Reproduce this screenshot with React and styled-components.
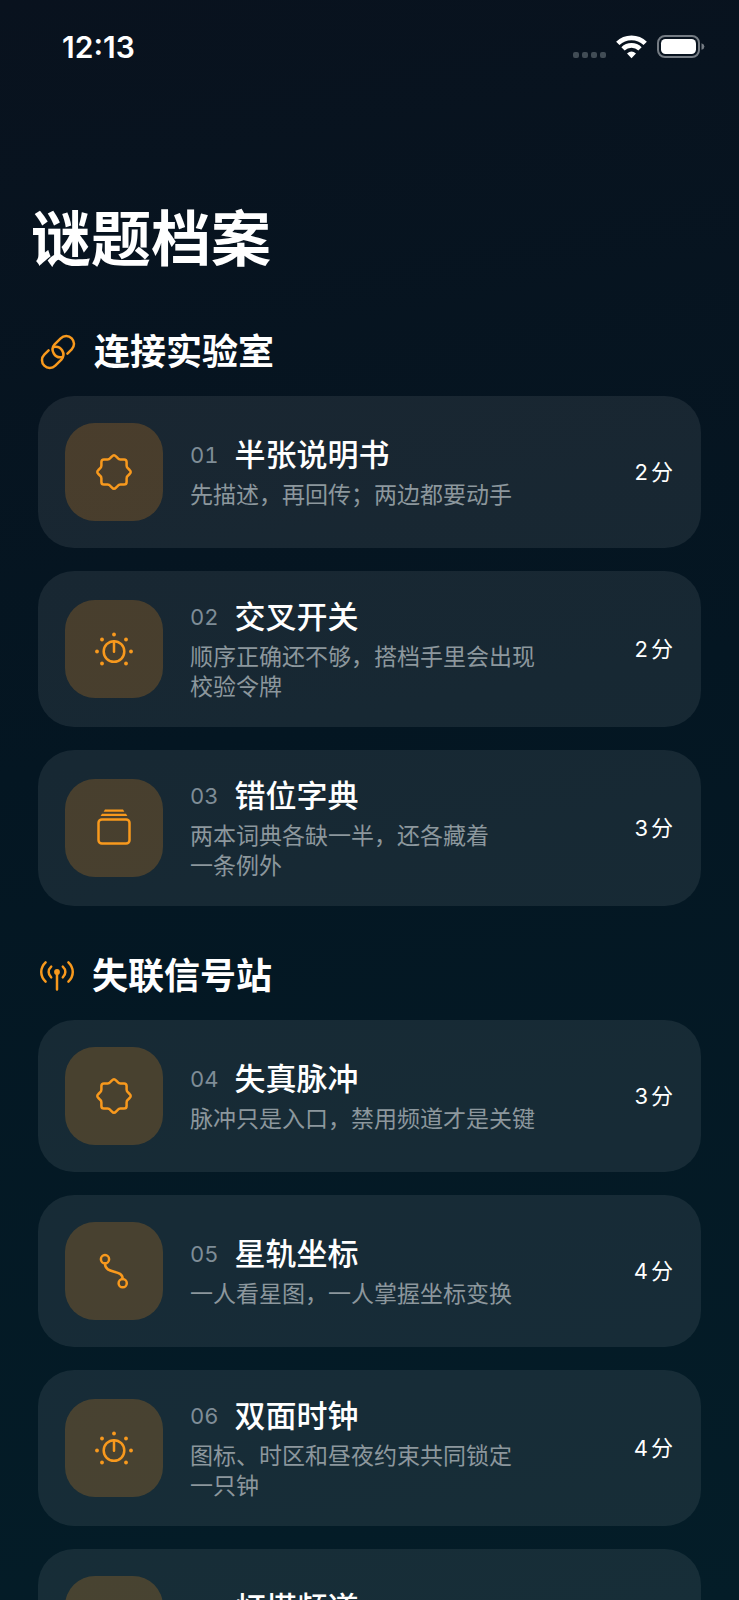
import styled, { createGlobalStyle } from 'styled-components';

const COLORS = {
    accent: '#f8991d',
    text: '#ffffff',
    number: '#7f8d97',
    muted: '#8c979d',
    card: 'rgba(255, 255, 255, 0.08)',
    tile: 'rgba(255, 149, 30, 0.21)',
};

const GlobalStyle = createGlobalStyle`
    * {
        box-sizing: border-box;
    }
    html {
        height: 100%;
    }
    body {
        margin: 0;
        height: 100%;
        overflow: hidden;
        font-family: Inter, 'Noto Sans CJK SC', sans-serif;
        color: ${COLORS.text};
    }
    #root {
        height: 100%;
    }
`;

const Screen = styled.div`
    height: 100%;
    overflow: hidden;
    background: linear-gradient(170deg, #09121e 0%, #041622 45%, #041d28 100%);
`;

const StatusBar = styled.header`
    display: flex;
    align-items: center;
    justify-content: space-between;
    height: 94px;
    padding: 0 34px 0 62px;
`;

const Time = styled.time`
    font-size: 30px;
    line-height: 36px;
    font-weight: 600;
`;

const StatusIcons = styled.div`
    display: flex;
    align-items: center;
    gap: 10px;
`;

const Title = styled.h1`
    margin: 0;
    padding: 99px 31px 0;
    font-size: 60px;
    line-height: 92px;
    font-weight: 700;
`;

const Section = styled.section`
    padding: 0 38px;
    margin-top: ${(props) => props.$top};
`;

const SectionHead = styled.h2`
    display: flex;
    align-items: center;
    gap: 18px;
    margin: 0 0 16px;
    font-size: 36px;
    line-height: 56px;
    font-weight: 700;
`;

const List = styled.ul`
    display: flex;
    flex-direction: column;
    gap: 23px;
    margin: 0;
    padding: 0;
    list-style: none;
`;

const Card = styled.button`
    display: flex;
    align-items: center;
    width: 100%;
    min-height: 152px;
    padding: 25px 28px 25px 27px;
    border: 0;
    border-radius: 36px;
    background: ${COLORS.card};
    color: inherit;
    font: inherit;
    text-align: left;
    cursor: pointer;
`;

const Tile = styled.span`
    display: flex;
    flex: none;
    align-items: center;
    justify-content: center;
    width: 98px;
    height: 98px;
    border-radius: 30px;
    background: ${COLORS.tile};
`;

const Body = styled.span`
    display: flex;
    flex: 1;
    flex-direction: column;
    gap: 4px;
    min-width: 0;
    padding-left: 27px;
`;

const NameRow = styled.span`
    display: flex;
    align-items: center;
    gap: 16px;
    line-height: 42px;
`;

const Number = styled.span`
    min-width: 28px;
    font-size: 22px;
    color: ${COLORS.number};
    font-variant-numeric: tabular-nums;
`;

const Name = styled.span`
    font-size: 31px;
    font-weight: 500;
`;

const Hint = styled.span`
    font-size: 23px;
    line-height: 30px;
    color: ${COLORS.muted};
    white-space: pre-line;
`;

const Minutes = styled.span`
    display: flex;
    flex: none;
    gap: 3px;
    font-size: 22px;
    line-height: 30px;
`;

const Svg = styled.svg`
    display: block;
    flex: none;
    overflow: visible;
    fill: none;
    stroke: ${COLORS.accent};
    stroke-width: 2.5;
    stroke-linecap: round;
    stroke-linejoin: round;
`;

const SealIcon = () => (
    <Svg width="40" height="40" viewBox="-20 -20 40 40" aria-hidden="true">
        <path d="M-2-15.6Q0-17.8 2-15.6L3.8-13.8Q4.8-12.6 6.4-12.6H10Q12.6-12.6 12.6-10V-6.4Q12.6-4.8 13.8-3.8L15.6-2Q17.8 0 15.6 2L13.8 3.8Q12.6 4.8 12.6 6.4V10Q12.6 12.6 10 12.6H6.4Q4.8 12.6 3.8 13.8L2 15.6Q0 17.8-2 15.6L-3.8 13.8Q-4.8 12.6-6.4 12.6H-10Q-12.6 12.6-12.6 10V6.4Q-12.6 4.8-13.8 3.8L-15.6 2Q-17.8 0-15.6-2L-13.8-3.8Q-12.6-4.8-12.6-6.4V-10Q-12.6-12.6-10-12.6H-6.4Q-4.8-12.6-3.8-13.8Z" />
    </Svg>
);

const DIAL_DOTS = [
    [-17, 0],
    [-12, -12],
    [0, -17],
    [12, -12],
    [17, 0],
    [12, 12],
    [-12, 12],
];

const DialIcon = () => (
    <Svg width="40" height="40" viewBox="-20 -22.5 40 40" aria-hidden="true">
        <circle r="10.3" />
        <path d="M0-10V.3" />
        {DIAL_DOTS.map(([x, y]) => (
            <circle key={`${x},${y}`} cx={x} cy={y} r="1.9" fill={COLORS.accent} stroke="none" />
        ))}
    </Svg>
);

const StackIcon = () => (
    <Svg width="40" height="40" viewBox="-20 -20 40 40" aria-hidden="true">
        <rect x="-15.5" y="-8.6" width="31" height="24.2" rx="3.4" />
        <path
            d="M-9-18.4H9L10.4-16.2H-10.4ZM-12-14.2H12L13.4-12H-13.4Z"
            fill={COLORS.accent}
            stroke="none"
        />
    </Svg>
);

const RouteIcon = () => (
    <Svg width="40" height="40" viewBox="-20 -20 40 40" aria-hidden="true">
        <circle cx="-9" cy="-11.8" r="4.1" />
        <circle cx="8.7" cy="12.2" r="4.1" />
        <path d="M-9-7.5C-9 4 8.7-2.5 8.7 8" />
    </Svg>
);

const LinkIcon = () => (
    <Svg width="38" height="40" viewBox="-20 -20 38 40" aria-hidden="true">
        <g transform="rotate(-45)">
            <path d="M-5.5-7.8H-11.6A7.8 7.8 0 0 0-11.6 7.8H-3A7.8 7.8 0 0 0 .6-6.6" />
            <path d="M5.5 7.8H11.6A7.8 7.8 0 0 0 11.6-7.8H3A7.8 7.8 0 0 0-.6 6.6" />
        </g>
    </Svg>
);

const AntennaIcon = () => (
    <Svg width="36" height="40" viewBox="-19 -20 36 40" aria-hidden="true">
        <circle cy="-4" r="2.9" fill={COLORS.accent} stroke="none" />
        <path d="M0-3V13.4M-5.8-9.3C-9.2-6.2-9.2-1.8-5.8 1.3M5.8-9.3C9.2-6.2 9.2-1.8 5.8 1.3M-11.4-13.6C-17.2-8-17.2 0-11.4 5.6M11.4-13.6C17.2-8 17.2 0 11.4 5.6" />
    </Svg>
);

const CellularIcon = () => (
    <svg width="33" height="28" viewBox="0 0 33 28" fill="#414c55" role="img" aria-label="无信号">
        <rect x="0" y="19" width="6" height="6" rx="2" />
        <rect x="9" y="19" width="6" height="6" rx="2" />
        <rect x="18" y="19" width="6" height="6" rx="2" />
        <rect x="27" y="19" width="6" height="6" rx="2" />
    </svg>
);

const WifiIcon = () => (
    <svg width="31" height="24" viewBox="0 0 31 24" fill="none" stroke="#fff" role="img" aria-label="Wi-Fi">
        <path d="M1.8 8.4A19.6 19.6 0 0 1 29.2 8.4" strokeWidth="4.8" />
        <path d="M7 13.9A12 12 0 0 1 24 13.9" strokeWidth="4.6" />
        <path d="M15.5 23.2L11 18.6Q15.5 14.6 20 18.6Z" fill="#fff" stroke="none" />
    </svg>
);

const BatteryIcon = () => (
    <svg width="48" height="24" viewBox="0 0 48 24" fill="none" role="img" aria-label="电池">
        <rect x="1" y="1" width="41" height="21" rx="7" stroke="#757c84" strokeWidth="2" />
        <rect x="4" y="4" width="35" height="15" rx="4.5" fill="#fff" />
        <path d="M44.5 8.2Q47.4 9 47.4 11.5T44.5 14.8Z" fill="#757c84" />
    </svg>
);

const SECTIONS = [
    {
        title: '连接实验室',
        icon: LinkIcon,
        top: '39px',
        puzzles: [
            { no: '01', name: '半张说明书', hint: '先描述，再回传；两边都要动手', minutes: 2, icon: SealIcon },
            { no: '02', name: '交叉开关', hint: '顺序正确还不够，搭档手里会出现\n校验令牌', minutes: 2, icon: DialIcon },
            { no: '03', name: '错位字典', hint: '两本词典各缺一半，还各藏着\n一条例外', minutes: 3, icon: StackIcon },
        ],
    },
    {
        title: '失联信号站',
        icon: AntennaIcon,
        top: '42px',
        puzzles: [
            { no: '04', name: '失真脉冲', hint: '脉冲只是入口，禁用频道才是关键', minutes: 3, icon: SealIcon },
            { no: '05', name: '星轨坐标', hint: '一人看星图，一人掌握坐标变换', minutes: 4, icon: RouteIcon },
            { no: '06', name: '双面时钟', hint: '图标、时区和昼夜约束共同锁定\n一只钟', minutes: 4, icon: DialIcon },
            { no: '07', name: '灯塔频道', hint: '两座灯塔轮流发出信号', minutes: 4, icon: SealIcon },
        ],
    },
];

const PuzzleCard = ({ puzzle }) => {
    const Icon = puzzle.icon;

    return (
        <li>
            <Card type="button">
                <Tile>
                    <Icon />
                </Tile>
                <Body>
                    <NameRow>
                        <Number>{puzzle.no}</Number>
                        <Name>{puzzle.name}</Name>
                    </NameRow>
                    <Hint>{puzzle.hint}</Hint>
                </Body>
                <Minutes>
                    <span>{puzzle.minutes}</span>
                    <span>分</span>
                </Minutes>
            </Card>
        </li>
    );
};

const App = () => {
    return (
        <Screen lang="zh-CN">
            <GlobalStyle />
            <StatusBar>
                <Time>12:13</Time>
                <StatusIcons>
                    <CellularIcon />
                    <WifiIcon />
                    <BatteryIcon />
                </StatusIcons>
            </StatusBar>
            <main>
                <Title>谜题档案</Title>
                {SECTIONS.map(({ title, icon: Icon, top, puzzles }) => (
                    <Section key={title} $top={top}>
                        <SectionHead>
                            <Icon />
                            {title}
                        </SectionHead>
                        <List>
                            {puzzles.map((puzzle) => (
                                <PuzzleCard key={puzzle.no} puzzle={puzzle} />
                            ))}
                        </List>
                    </Section>
                ))}
            </main>
        </Screen>
    );
};

export default App;
